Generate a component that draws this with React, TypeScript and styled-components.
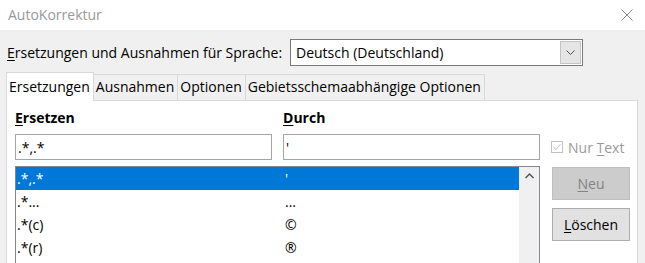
import React from "react";
import styled, { createGlobalStyle } from "styled-components";

const GlobalStyle = createGlobalStyle`
  html, body {
    margin: 0;
    padding: 0;
    background: #f0f0f0;
  }
  body {
    font-family: "Open Sans", "Noto Sans", sans-serif;
    font-size: 14px;
    color: #000000;
  }
`;

const Window = styled.div`
  width: 645px;
  height: 263px;
  overflow: hidden;
  background: #f0f0f0;
  display: flex;
  flex-direction: column;
`;

const TitleBar = styled.div`
  height: 30px;
  flex: none;
  background: #ffffff;
  display: flex;
  align-items: center;
  justify-content: space-between;
  padding: 0 12px 0 8px;
  box-sizing: border-box;
`;

const Title = styled.span`
  color: #999999;
  font-size: 14px;
  margin-top: -2px;
`;

const CloseIcon = styled.svg`
  width: 12px;
  height: 12px;
  margin-top: -1px;
`;

const Content = styled.div`
  padding: 9px 0 0 6px;
  display: flex;
  flex-direction: column;
`;

const LangRow = styled.div`
  display: flex;
  align-items: center;
  height: 27px;
`;

const LangLabel = styled.span`
  margin-left: 1px;
  width: 283px;
`;

const Key = styled.span`
  text-decoration: underline;
  text-underline-offset: 2px;
  text-decoration-thickness: 1px;
`;

const Select = styled.div`
  width: 293px;
  height: 27px;
  box-sizing: border-box;
  border: 1px solid #7a7a7a;
  background: #ffffff;
  display: flex;
  align-items: center;
  padding: 0 1px 0 5px;
`;

const SelectText = styled.span`
  flex: 1;
`;

const SelectButton = styled.div`
  width: 21px;
  height: 23px;
  box-sizing: border-box;
  border: 1px solid #c5c5c5;
  background: #e5e5e5;
  display: flex;
  align-items: center;
  justify-content: center;
`;

const TabStrip = styled.div`
  display: flex;
  align-items: flex-end;
  height: 28px;
  margin-top: 6px;
  position: relative;
  z-index: 1;
`;

const Tab = styled.div<{ $active?: boolean }>`
  height: ${(p) => (p.$active ? 29 : 26)}px;
  margin-bottom: ${(p) => (p.$active ? -1 : 0)}px;
  padding: 0 3px 2px 2px;
  margin-left: ${(p) => (p.$active ? 0 : -1)}px;
  box-sizing: border-box;
  border: 1px solid #d9d9d9;
  border-bottom: none;
  background: ${(p) => (p.$active ? "#ffffff" : "#f0f0f0")};
  display: flex;
  align-items: center;
  white-space: nowrap;
`;

const Panel = styled.div`
  width: 632px;
  height: 200px;
  box-sizing: border-box;
  border: 1px solid #d9d9d9;
  background: #ffffff;
  padding: 7px 0 0 8px;
  display: flex;
`;

const LeftArea = styled.div`
  width: 525px;
  display: flex;
  flex-direction: column;
`;

const Fields = styled.div`
  display: grid;
  grid-template-columns: 257px 257px;
  column-gap: 11px;
  row-gap: 7px;
`;

const ColumnHead = styled.div`
  font-weight: 700;
  height: 19px;
  line-height: 19px;
`;

const TextInput = styled.input`
  height: 26px;
  width: 100%;
  box-sizing: border-box;
  border: 1px solid #a5a5a5;
  padding: 0 0 0 2px;
  margin: 0;
  font-family: inherit;
  font-size: 14px;
  color: #000000;
  background: #ffffff;
  outline: none;
`;

const ListBox = styled.div`
  margin-top: 6px;
  height: 120px;
  box-sizing: border-box;
  border: 1px solid #828790;
  border-bottom: none;
  display: flex;
`;

const Rows = styled.div`
  flex: 1;
  display: flex;
  flex-direction: column;
`;

const Row = styled.div<{ $selected?: boolean }>`
  height: 23px;
  display: grid;
  grid-template-columns: 268px 1fr;
  align-items: center;
  padding-left: 1px;
  background: ${(p) => (p.$selected ? "#0078d7" : "transparent")};
  color: ${(p) => (p.$selected ? "#ffffff" : "#000000")};
  white-space: nowrap;
`;

const ScrollTrack = styled.div`
  width: 20px;
  background: #f0f0f0;
  display: flex;
  justify-content: center;
  padding-top: 6px;
  box-sizing: border-box;
`;

const SideColumn = styled.div`
  width: 78px;
  margin-left: 12px;
  padding-top: 26px;
  display: flex;
  flex-direction: column;
`;

const CheckRow = styled.div`
  height: 26px;
  display: flex;
  align-items: center;
  margin-left: -1px;
  color: #999999;
  white-space: nowrap;
`;

const CheckBox = styled.div`
  width: 12px;
  height: 12px;
  box-sizing: border-box;
  border: 1px solid #c3c3c3;
  margin-right: 5px;
  display: flex;
  align-items: center;
  justify-content: center;
`;

const Button = styled.div<{ $disabled?: boolean }>`
  height: 33px;
  box-sizing: border-box;
  border: 1px solid ${(p) => (p.$disabled ? "#bfbfbf" : "#adadad")};
  background: ${(p) => (p.$disabled ? "#cccccc" : "#e1e1e1")};
  color: ${(p) => (p.$disabled ? "#838383" : "#000000")};
  display: flex;
  align-items: center;
  justify-content: center;
  margin-top: ${(p) => (p.$disabled ? 7 : 8)}px;
`;

const entries = [
  { from: ".*,.*", to: "'" },
  { from: ".*...", to: "..." },
  { from: ".*(c)", to: "©" },
  { from: ".*(r)", to: "®" },
];

export default function App() {
  return (
    <>
      <GlobalStyle />
      <Window>
        <TitleBar>
          <Title>AutoKorrektur</Title>
          <CloseIcon viewBox="0 0 12 12">
            <path d="M0.5 0.5 L11.5 11.5 M11.5 0.5 L0.5 11.5" stroke="#8a8a8a" strokeWidth="1" fill="none" />
          </CloseIcon>
        </TitleBar>
        <Content>
          <LangRow>
            <LangLabel>
              <Key>E</Key>rsetzungen und Ausnahmen für Sprache:
            </LangLabel>
            <Select>
              <SelectText>Deutsch (Deutschland)</SelectText>
              <SelectButton>
                <svg width="9" height="5" viewBox="0 0 9 5">
                  <path d="M0.5 0.5 L4.5 4.5 L8.5 0.5" stroke="#505050" strokeWidth="1" fill="none" />
                </svg>
              </SelectButton>
            </Select>
          </LangRow>
          <TabStrip>
            <Tab $active>Ersetzungen</Tab>
            <Tab>Ausnahmen</Tab>
            <Tab>Optionen</Tab>
            <Tab>Gebietsschemaabhängige Optionen</Tab>
          </TabStrip>
          <Panel>
            <LeftArea>
              <Fields>
                <ColumnHead>
                  <Key>E</Key>rsetzen
                </ColumnHead>
                <ColumnHead>
                  <Key>D</Key>urch
                </ColumnHead>
                <TextInput readOnly defaultValue=".*,.*" />
                <TextInput readOnly defaultValue="'" />
              </Fields>
              <ListBox>
                <Rows>
                  {entries.map((e, i) => (
                    <Row key={e.from} $selected={i === 0}>
                      <span>{e.from}</span>
                      <span>{e.to}</span>
                    </Row>
                  ))}
                </Rows>
                <ScrollTrack>
                  <svg width="9" height="6" viewBox="0 0 9 6">
                    <path d="M0.5 5 L4.5 1 L8.5 5" stroke="#505050" strokeWidth="1.4" fill="none" />
                  </svg>
                </ScrollTrack>
              </ListBox>
            </LeftArea>
            <SideColumn>
              <CheckRow>
                <CheckBox>
                  <svg width="10" height="10" viewBox="0 0 10 10">
                    <path d="M1.5 5 L4 7.5 L8.5 2" stroke="#c3c3c3" strokeWidth="1" fill="none" />
                  </svg>
                </CheckBox>
                <span>
                  Nur <Key>T</Key>ext
                </span>
              </CheckRow>
              <Button $disabled>
                <span>
                  <Key>N</Key>eu
                </span>
              </Button>
              <Button>
                <span>
                  <Key>L</Key>öschen
                </span>
              </Button>
            </SideColumn>
          </Panel>
        </Content>
      </Window>
    </>
  );
}
